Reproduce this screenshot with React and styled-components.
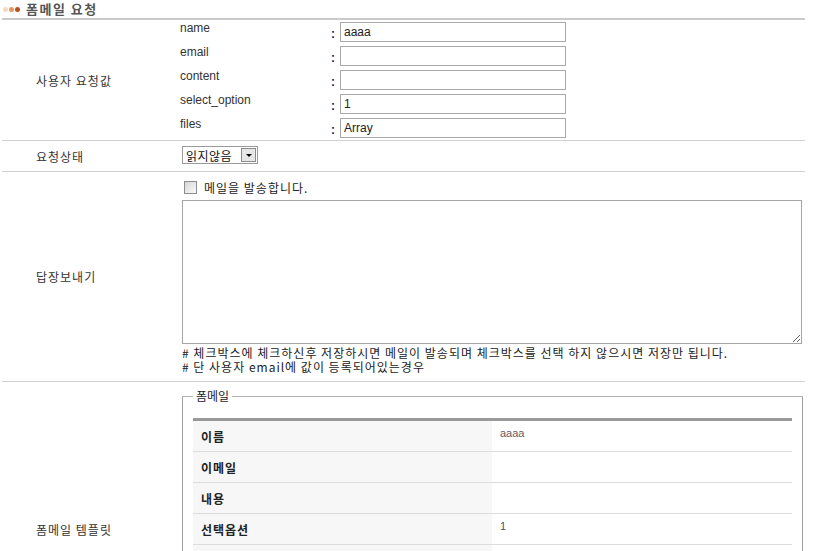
import React from "react";
import styled, { createGlobalStyle } from "styled-components";

const Global = createGlobalStyle`
  html, body { margin: 0; padding: 0; background: #fff; }
  body {
    font-family: "Liberation Sans", "Noto Sans CJK KR", sans-serif;
    font-size: 12px;
    color: #333;
  }
`;

const Page = styled.div`
  width: 803px;
  margin-left: 2px;
`;

const Header = styled.div`
  display: flex;
  align-items: center;
  height: 20px;
  border-bottom: 2px solid #cacaca;
  box-sizing: border-box;
  padding-left: 1px;
  gap: 6px;
`;

const Dots = styled.div`
  display: flex;
  gap: 1px;
  align-items: center;
`;

const Dot = styled.span`
  width: 5px;
  height: 5px;
  border-radius: 50%;
  background: ${(p) => p.$c};
`;

const Title = styled.h1`
  margin: 0;
  font-family: "Noto Sans CJK KR", sans-serif;
  font-size: 13px;
  font-weight: bold;
  letter-spacing: 1.5px;
  color: #555;
  line-height: 16px;
`;

const Section = styled.div`
  display: grid;
  grid-template-columns: 178px 1fr;
  border-bottom: 1px solid #d2d2d2;
`;

const SectionLabel = styled.div`
  display: flex;
  align-items: center;
  padding-left: 34px;
  font-family: "Noto Sans CJK KR", sans-serif;
  font-size: 12px;
  letter-spacing: 1px;
  color: #333;
`;

const SectionBody = styled.div`
  padding: ${(p) => p.$pad || "0"};
`;

const FieldRow = styled.div`
  display: grid;
  grid-template-columns: 150px 10px 226px;
  height: 24px;
`;

const FieldName = styled.div`
  padding-top: 1px;
  line-height: 14px;
  color: #333;
`;

const Colon = styled.div`
  display: flex;
  align-items: center;
  padding-top: 4px;
  padding-left: 1px;
  font-weight: bold;
  color: #223;
`;

const TextInput = styled.input`
  box-sizing: border-box;
  margin: 2px 0 0;
  width: 226px;
  height: 20px;
  border: 1px solid #a9a9a9;
  padding: 0 3px;
  font-family: "Liberation Sans", sans-serif;
  font-size: 12px;
  color: #222;
  outline: none;
`;

const SelectBox = styled.div`
  display: inline-flex;
  align-items: center;
  justify-content: space-between;
  box-sizing: border-box;
  width: 76px;
  height: 18px;
  margin-left: 2px;
  border: 1px solid #9a9a9a;
  padding: 0 1px 0 3px;
  font-family: "Noto Sans CJK KR", sans-serif;
  font-size: 12px;
  letter-spacing: 0.5px;
  color: #111;
  background: #fff;
`;

const SelectArrow = styled.span`
  display: flex;
  align-items: center;
  justify-content: center;
  width: 15px;
  height: 14px;
  box-sizing: border-box;
  border: 1px solid #8c8c8c;
  background: #e6e6e6;
  &::after {
    content: "";
    border-left: 3px solid transparent;
    border-right: 3px solid transparent;
    border-top: 3px solid #000;
    margin-top: 1px;
  }
`;

const CheckLine = styled.label`
  display: flex;
  align-items: center;
  gap: 7px;
  height: 16px;
  margin-left: 4px;
  font-family: "Noto Sans CJK KR", sans-serif;
  font-size: 12px;
  letter-spacing: 1px;
  color: #222;
`;

const Check = styled.input.attrs({ type: "checkbox" })`
  appearance: none;
  margin: 0;
  width: 13px;
  height: 13px;
  border: 1px solid #8e8e8e;
  background: linear-gradient(135deg, #d6d6d6, #fafafa);
  box-sizing: border-box;
`;

const TextArea = styled.textarea`
  display: block;
  box-sizing: border-box;
  width: 620px;
  height: 144px;
  margin: 5px 0 0 2px;
  border: 1px solid #a5a5a5;
  resize: both;
  outline: none;
`;

const Notes = styled.div`
  margin: 2px 0 0 2px;
  font-family: "Noto Sans CJK KR", sans-serif;
  font-size: 12px;
  line-height: 14px;
  letter-spacing: 1px;
  color: #222;
`;

const Fieldset = styled.fieldset`
  box-sizing: border-box;
  width: 621px;
  margin: 7px 0 0 2px;
  padding: 15px 10px 10px;
  border: 1px solid #a0a0a0;
  border-top-color: #b4b4b4;
`;

const Legend = styled.legend`
  padding: 0 3px;
  font-family: "Noto Sans CJK KR", sans-serif;
  font-size: 12px;
  line-height: 14px;
  color: #222;
`;

const Table = styled.div`
  border-top: 3px solid #999;
`;

const TRow = styled.div`
  display: grid;
  grid-template-columns: 299px 1fr;
  height: 31px;
  box-sizing: border-box;
  border-bottom: 1px solid #ddd;
`;

const TLabel = styled.div`
  display: flex;
  align-items: center;
  padding-left: 8px;
  background: #f7f7f7;
  font-family: "Noto Sans CJK KR", sans-serif;
  font-size: 12px;
  font-weight: bold;
  letter-spacing: 1px;
  color: #222;
`;

const TValue = styled.div`
  padding: 6px 0 0 8px;
  font-family: "Liberation Sans", sans-serif;
  font-size: 11px;
  color: ${(p) => p.$c || "#555"};
`;

const fields = [
  { name: "name", value: "aaaa" },
  { name: "email", value: "" },
  { name: "content", value: "" },
  { name: "select_option", value: "1" },
  { name: "files", value: "Array" },
];

const templateRows = [
  { label: "이름", value: "aaaa", color: "#6a5a6a" },
  { label: "이메일", value: "" },
  { label: "내용", value: "" },
  { label: "선택옵션", value: "1", color: "#3a5a6a" },
  { label: "첨부파일", value: "Array" },
];

export default function App() {
  return (
    <>
      <Global />
      <Page>
        <Header>
          <Dots>
            <Dot $c="#f6d9bf" />
            <Dot $c="#e8955f" />
            <Dot $c="#b5521e" />
          </Dots>
          <Title>폼메일 요청</Title>
        </Header>

        <Section>
          <SectionLabel>사용자 요청값</SectionLabel>
          <SectionBody>
            {fields.map((f) => (
              <FieldRow key={f.name}>
                <FieldName>{f.name}</FieldName>
                <Colon>:</Colon>
                <TextInput defaultValue={f.value} readOnly />
              </FieldRow>
            ))}
          </SectionBody>
        </Section>

        <Section>
          <SectionLabel>요청상태</SectionLabel>
          <SectionBody $pad="5px 0 7px">
            <SelectBox>
              <span>읽지않음</span>
              <SelectArrow />
            </SelectBox>
          </SectionBody>
        </Section>

        <Section>
          <SectionLabel>답장보내기</SectionLabel>
          <SectionBody $pad="7px 0 7px">
            <CheckLine>
              <Check />
              메일을 발송합니다.
            </CheckLine>
            <TextArea />
            <Notes>
              # 체크박스에 체크하신후 저장하시면 메일이 발송되며 체크박스를 선택 하지 않으시면 저장만 됩니다.
              <br /># 단 사용자 email에 값이 등록되어있는경우
            </Notes>
          </SectionBody>
        </Section>

        <Section>
          <SectionLabel>폼메일 템플릿</SectionLabel>
          <SectionBody $pad="0 0 90px">
            <Fieldset>
              <Legend>폼메일</Legend>
              <Table>
                {templateRows.map((r) => (
                  <TRow key={r.label}>
                    <TLabel>{r.label}</TLabel>
                    <TValue $c={r.color}>{r.value}</TValue>
                  </TRow>
                ))}
              </Table>
            </Fieldset>
          </SectionBody>
        </Section>
      </Page>
    </>
  );
}
